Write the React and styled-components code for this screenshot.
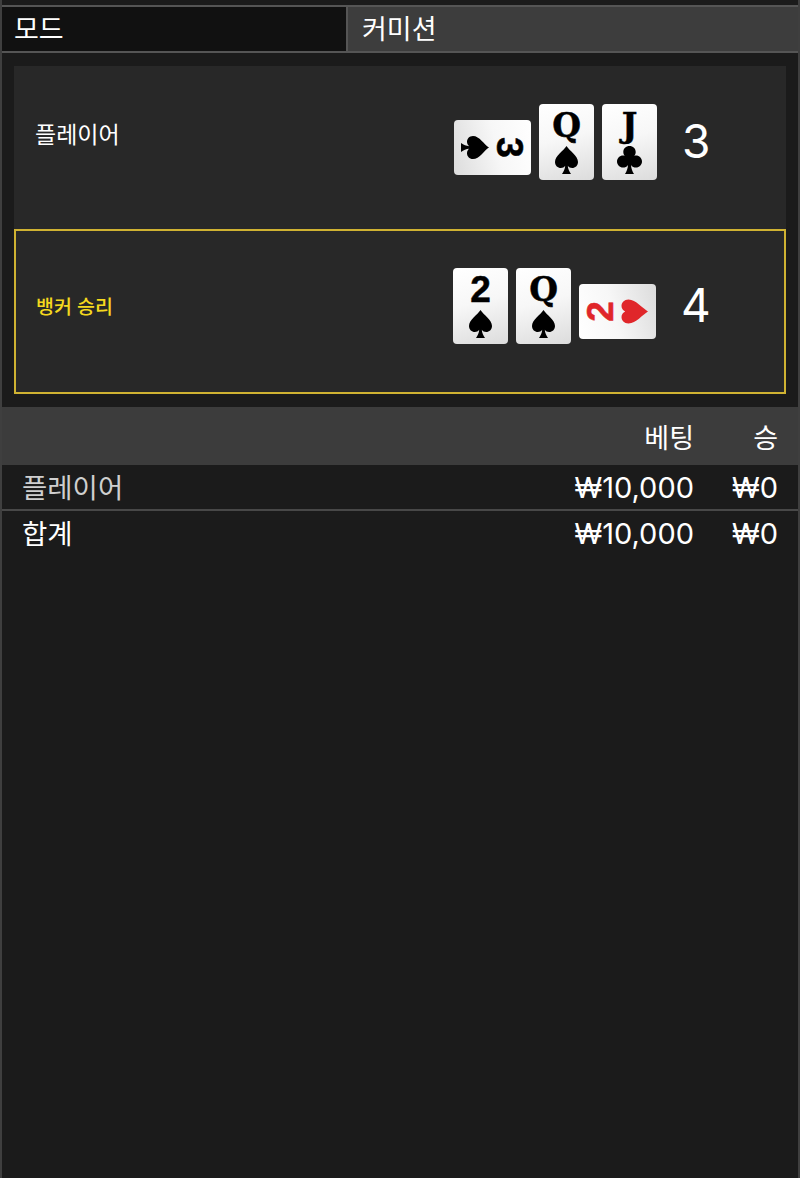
import React from "react"
import styled, { createGlobalStyle } from 'styled-components'

const Global = createGlobalStyle`
  html, body { margin: 0; padding: 0; background: #1b1b1b; }
  * { box-sizing: border-box; }
`

const FONT = `Inter, Roboto, "Noto Sans CJK KR", sans-serif`

const Page = styled.div`
  width: 800px;
  height: 1178px;
  background: #1b1b1b;
  border-left: 2px solid #3f3f3f;
  border-right: 2px solid #3f3f3f;
  padding-top: 5px;
  font-family: ${FONT};
  color: #fff;
  overflow: hidden;
`

const Tabs = styled.div`
  display: grid;
  grid-template-columns: 344px 1fr;
  height: 48px;
  border-top: 2px solid #555;
  border-bottom: 2px solid #555;
`

const Tab = styled.div`
  display: flex;
  align-items: center;
  padding-left: ${p => p.$active ? 12 : 14}px;
  font-size: 27px;
  padding-bottom: 3px;
  background: ${p => p.$active ? '#111' : '#3d3d3d'};
  border-left: ${p => p.$active ? 0 : '2px solid #555'};
`

const Board = styled.div`
  padding: 13px 12px;
`

const Hand = styled.div`
  height: ${p => p.$win ? 165 : 163}px;
  display: flex;
  justify-content: space-between;
  background: #282828;
  border: ${p => p.$win ? '2px solid #cfb232' : '0'};
  padding-left: ${p => p.$win ? 20 : 21}px;
`

const Name = styled.div`
  font-size: ${p => p.$win ? 19.5 : 23}px;
  font-weight: ${p => p.$win ? 500 : 400};
  color: ${p => p.$win ? '#f5d91e' : '#fff'};
  margin-top: ${p => p.$win ? 62 : 55}px;
  line-height: 28px;
`

const Right = styled.div`
  display: flex;
  align-items: flex-start;
  padding-top: ${p => p.$win ? 37 : 38}px;
  margin-right: ${p => p.$win ? 47 : 48}px;
`

const Cards = styled.div`
  display: flex;
  align-items: flex-start;
  gap: 8px;
  height: 76px;
`

const Slot = styled.div`
  width: ${p => p.$wide ? 77 : 55}px;
  height: 76px;
  padding-top: ${p => p.$wide ? 11 : 0}px;
  display: flex;
  align-items: center;
  justify-content: center;
  flex: none;
`

const CardFace = styled.div`
  width: 55px;
  height: ${p => p.$turn ? 77 : 76}px;
  flex: none;
  border-radius: 4px;
  background: linear-gradient(165deg, #ffffff 0%, #f7f7f7 45%, #dcdcdc 100%);
  transform: rotate(${p => p.$turn || 0}deg);
  display: flex;
  flex-direction: column;
  align-items: center;
  color: ${p => p.$red ? '#e0262a' : '#000'};
`

const Rank = styled.div`
  font-family: ${p => p.$digit ? '"Liberation Sans", sans-serif' : '"DejaVu Serif", serif'};
  font-weight: 700;
  font-size: ${p => p.$digit ? 37 : 33}px;
  line-height: 38px;
  height: 38px;
  margin-top: 3px;
  margin-bottom: 1px;
  -webkit-text-stroke: 0.5px currentColor;
`

const SuitIcon = styled.svg`
  display: block;
  width: 25px;
  height: 28px;
  fill: currentColor;
`

const suitPaths = {
  spade: 'M12.5 0C9.5 5 1 9.5 1 16c0 3.8 2.9 6 5.8 6 1.8 0 3.4-.8 4.4-2.2-.2 3-1.4 5.6-3.2 8.2h9c-1.8-2.6-3-5.2-3.2-8.2 1 1.4 2.6 2.2 4.4 2.2 2.9 0 5.8-2.2 5.8-6C24 9.5 15.5 5 12.5 0Z',
  club: 'M12.5 0C9 0 6.3 2.6 6.3 5.9c0 1.6.6 3 1.6 4.1C7.2 9.7 6.6 9.6 6 9.6 2.7 9.6 0 12.3 0 15.6s2.7 6 6 6c2 0 3.9-1 5-2.7-.2 3.4-1.3 6.4-3 9.1h9c-1.7-2.7-2.8-5.7-3-9.1 1.1 1.7 3 2.7 5 2.7 3.3 0 6-2.7 6-6s-2.7-6-6-6c-.6 0-1.2.1-1.9.4 1-1.1 1.6-2.5 1.6-4.1C18.7 2.6 16 0 12.5 0Z',
  heart: 'M12.5 27C9.5 21.5.5 15 .5 7.5.5 3.2 3.6.5 7 .5c2.5 0 4.5 1.5 5.5 3.7C13.5 2 15.5.5 18 .5c3.4 0 6.5 2.7 6.5 7 0 7.5-9 14-12 19.5Z',
}

const Suit = ({ name }) =>
  <SuitIcon viewBox="0 0 25 28">
    <path d={suitPaths[name]} />
  </SuitIcon>

const Score = styled.div`
  width: 56px;
  margin-left: 25px;
  font-size: 46px;
  line-height: 74px;
  text-align: left;
`

const Row = styled.div`
  display: grid;
  grid-template-columns: 1fr 120px 84px;
  align-items: center;
  height: ${p => p.$h}px;
  padding: 0 20px;
  background: ${p => p.$head ? '#3c3c3c' : 'transparent'};
  color: ${p => p.$dim ? '#cfcfcf' : '#fff'};
  border-bottom: ${p => p.$line ? '2px solid #484848' : '0'};
  margin-bottom: ${p => p.$head ? 1 : 0}px;
`

const Cell = styled.div`
  text-align: right;
  font-size: ${p => p.$head ? 27 : 29}px;
  color: ${p => p.$bright ? '#fff' : 'inherit'};
  white-space: nowrap;
  padding-bottom: ${p => p.$head ? 0 : 2}px;
`

const Label = styled.div`
  font-size: 27.5px;
  padding-bottom: 4px;
`

const Card = ({ rank, suit, red, turn }) =>
  <Slot $wide={!!turn}>
    <CardFace $turn={turn} $red={red}>
      <Rank $digit={/\d/.test(rank)}>{rank}</Rank>
      <Suit name={suit} />
    </CardFace>
  </Slot>

const hands = [
  { name: '플레이어', score: 3, cards: [
    { rank: '3', suit: 'spade', turn: 90 },
    { rank: 'Q', suit: 'spade' },
    { rank: 'J', suit: 'club' },
  ] },
  { name: '뱅커 승리', score: 4, win: true, cards: [
    { rank: '2', suit: 'spade' },
    { rank: 'Q', suit: 'spade' },
    { rank: '2', suit: 'heart', red: true, turn: -90 },
  ] },
]

export default function App() {
  return (
    <Page>
      <Global />
      <Tabs>
        <Tab $active>모드</Tab>
        <Tab>커미션</Tab>
      </Tabs>
      <Board>
        {hands.map(h =>
          <Hand key={h.name} $win={h.win}>
            <Name $win={h.win}>{h.name}</Name>
            <Right $win={h.win}>
              <Cards>
                {h.cards.map((c, i) => <Card key={i} {...c} />)}
              </Cards>
              <Score>{h.score}</Score>
            </Right>
          </Hand>
        )}
      </Board>
      <Row $head $h={58}>
        <span />
        <Cell $head>베팅</Cell>
        <Cell $head>승</Cell>
      </Row>
      <Row $dim $line $h={45}>
        <Label>플레이어</Label>
        <Cell $bright>₩10,000</Cell>
        <Cell $bright>₩0</Cell>
      </Row>
      <Row $h={46}>
        <Label>합계</Label>
        <Cell>₩10,000</Cell>
        <Cell>₩0</Cell>
      </Row>
    </Page>
  )
}
